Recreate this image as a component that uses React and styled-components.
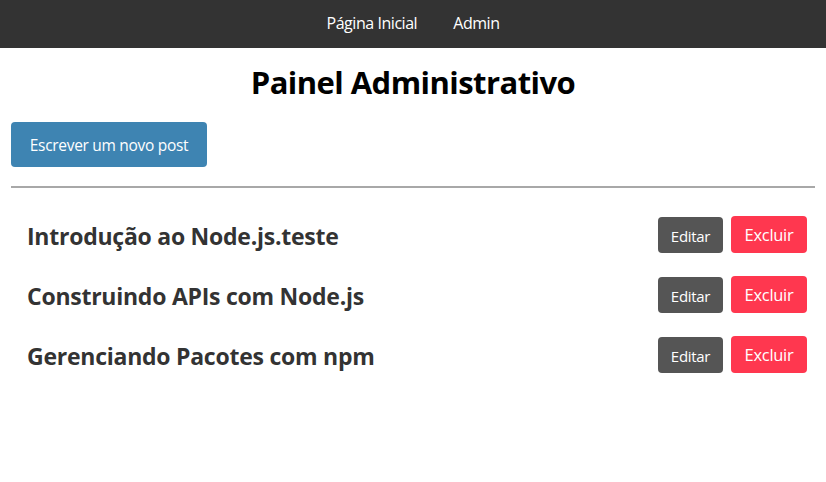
import React from 'react';
import styled, { createGlobalStyle } from 'styled-components';

const GlobalStyle = createGlobalStyle`
  body {
    margin: 0;
    font-family: 'Open Sans', 'Noto Sans', sans-serif;
    background: #fff;
  }
`;

const Nav = styled.nav`
  height: 48px;
  background: #333;
  display: flex;
  justify-content: center;
  align-items: center;
  gap: 36px;
  padding-bottom: 3px;
  box-sizing: border-box;
`;

const NavLink = styled.a`
  color: #fff;
  font-size: 16px;
  text-decoration: none;
  letter-spacing: -0.45px;
`;

const Main = styled.main`
  padding: 0 11px;
`;

const Title = styled.h1`
  margin: 14px 0 0;
  text-align: center;
  font-size: 31px;
  line-height: 40px;
  font-weight: 700;
  color: #000;
  letter-spacing: -0.55px;
`;

const NewPost = styled.button`
  margin-top: 20px;
  height: 45px;
  width: 196px;
  border: none;
  border-radius: 4px;
  background: #3e84b2;
  color: #fff;
  font-family: inherit;
  font-size: 15.5px;
  letter-spacing: -0.3px;
`;

const Rule = styled.hr`
  margin: 19px 0 0;
  border: none;
  border-top: 2px solid #a8a8a8;
`;

const List = styled.ul`
  list-style: none;
  margin: 28px 0 0;
  padding: 0;
  display: flex;
  flex-direction: column;
  gap: 22px;
`;

const Row = styled.li`
  display: flex;
  align-items: center;
  justify-content: space-between;
  padding: 0 8px 0 16px;
  height: 38px;
`;

const PostTitle = styled.h2`
  margin: 0;
  padding-top: 2px;
  font-size: 23px;
  font-weight: 700;
  color: #333;
  letter-spacing: -0.25px;
`;

const Actions = styled.div`
  display: flex;
  align-items: center;
  gap: 8px;
`;

const ActionButton = styled.button`
  border: none;
  border-radius: 4px;
  color: #fff;
  font-family: inherit;
  letter-spacing: -0.3px;
  background: ${({ danger }) => (danger ? '#ff374f' : '#555')};
  width: ${({ danger }) => (danger ? '76px' : '65px')};
  height: ${({ danger }) => (danger ? '37px' : '36px')};
  font-size: ${({ danger }) => (danger ? '16.5px' : '15px')};
  padding: 0;
  margin-top: ${({ danger }) => (danger ? '-1px' : '0')};
  align-self: flex-start;
  line-height: ${({ danger }) => (danger ? '32px' : '38px')};
`;

const posts = [
  'Introdução ao Node.js.teste',
  'Construindo APIs com Node.js',
  'Gerenciando Pacotes com npm'
];

const App = () => (
  <>
    <GlobalStyle />
    <Nav>
      <NavLink href="#">Página Inicial</NavLink>
      <NavLink href="#">Admin</NavLink>
    </Nav>
    <Main>
      <Title>Painel Administrativo</Title>
      <NewPost>Escrever um novo post</NewPost>
      <Rule />
      <List>
        {posts.map((post) => (
          <Row key={post}>
            <PostTitle>{post}</PostTitle>
            <Actions>
              <ActionButton>Editar</ActionButton>
              <ActionButton danger>Excluir</ActionButton>
            </Actions>
          </Row>
        ))}
      </List>
    </Main>
  </>
);

export default App;
